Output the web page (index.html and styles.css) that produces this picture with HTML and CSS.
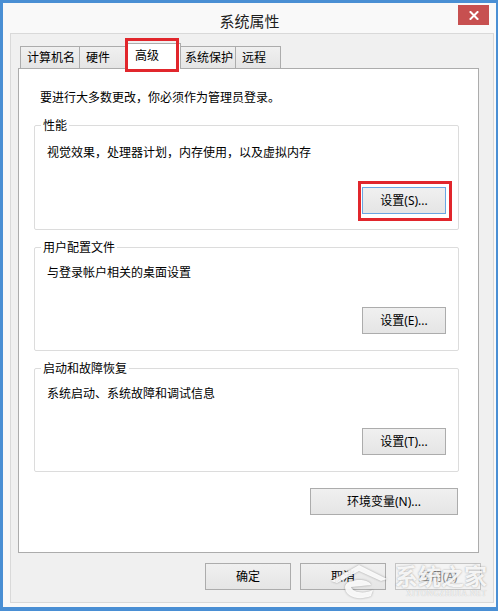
FILE: index.html
```html
<!DOCTYPE html>
<html lang="zh-CN">
<head>
<meta charset="utf-8">
<title>系统属性</title>
<link rel="stylesheet" href="styles.css">
</head>
<body>
<div class="window">
  <div class="titlebar">
    <div class="title">系统属性</div>
    <div class="close" aria-label="关闭">
      <svg width="10" height="9" viewBox="0 0 10 9"><path d="M1.5 1 L8.5 8 M8.5 1 L1.5 8" stroke="#fff" stroke-width="2" stroke-linecap="square" fill="none"/></svg>
    </div>
  </div>
  <div class="client">
    <div class="tabs">
      <div class="tab tab-1">计算机名</div>
      <div class="tab tab-2">硬件</div>
      <div class="tab tab-3 active">高级<span class="mark mark-tab"></span></div>
      <div class="tab tab-4">系统保护</div>
      <div class="tab tab-5">远程</div>
    </div>
    <div class="panel">
      <p class="intro">要进行大多数更改，你必须作为管理员登录。</p>
      <fieldset class="group group-first">
        <legend>性能</legend>
        <p class="desc">视觉效果，处理器计划，内存使用，以及虚拟内存</p>
        <div class="btn-row"><button class="btn btn-set is-default">设置(S)...<span class="mark mark-btn"></span></button></div>
      </fieldset>
      <fieldset class="group">
        <legend>用户配置文件</legend>
        <p class="desc">与登录帐户相关的桌面设置</p>
        <div class="btn-row"><button class="btn btn-set">设置(E)...</button></div>
      </fieldset>
      <fieldset class="group">
        <legend>启动和故障恢复</legend>
        <p class="desc">系统启动、系统故障和调试信息</p>
        <div class="btn-row"><button class="btn btn-set">设置(T)...</button></div>
      </fieldset>
      <div class="env-row"><button class="btn btn-env">环境变量(N)...</button></div>
    </div>
    <div class="footer">
      <button class="btn btn-foot">确定</button>
      <button class="btn btn-foot">取消</button>
      <button class="btn btn-foot" disabled>应用(A)</button>
    </div>
  </div>
  <div class="watermark" aria-hidden="true">
    <svg class="wm-logo" width="66" height="40" viewBox="0 0 66 40">
      <path d="M6 20 L34 4 L62 18 L56 20 L34 10 L12 22 Z" fill="rgba(255,255,255,0.9)"/>
      <path d="M20 26 C20 18 44 16 46 24 L26 26 C28 32 40 33 48 29 L46 35 C34 40 20 36 20 26 Z" fill="rgba(255,255,255,0.9)"/>
    </svg>
    <div class="wm-text">
      <span class="wm-name">系统之家</span>
      <span class="wm-url">XITONGZHIJIA.NET</span>
    </div>
  </div>
</div>
</body>
</html>
```
FILE: styles.css
```css
* { box-sizing: border-box; }
html, body { margin: 0; padding: 0; }
body {
  width: 498px;
  height: 611px;
  overflow: hidden;
  font-family: "Noto Sans", "Noto Sans CJK SC", sans-serif;
  font-size: 12px;
  color: #000;
  background: #4a8fd4;
}
.window {
  position: relative;
  width: 498px;
  height: 611px;
  border-style: solid;
  border-color: #4a8fd4;
  border-width: 3px 2px 4px 3px;
  background: #f9f9f9;
  display: flex;
  flex-direction: column;
}
.titlebar {
  height: 30px;
  display: grid;
  grid-template-columns: 1fr auto 1fr;
  align-items: start;
}
.title {
  grid-column: 2;
  padding-top: 6px;
  line-height: 24px;
  font-size: 15px;
  color: #1e1e1e;
  font-family: "Noto Sans CJK SC", sans-serif;
}
.close {
  grid-column: 3;
  justify-self: end;
  margin-top: 2px;
  margin-right: 7px;
  width: 31px;
  height: 20px;
  background: #c75050;
  display: flex;
  align-items: center;
  justify-content: center;
}
.client {
  flex: 1;
  margin: 0 2px 4px 7px;
  border: 1px solid #d9d9d9;
  background: #f0f0f0;
  padding: 12px 12px 0 7px;
  display: flex;
  flex-direction: column;
}
.tabs {
  display: flex;
  align-items: flex-end;
  height: 22px;
  margin-left: 2px;
}
.tab {
  height: 22px;
  border: 1px solid #acacac;
  border-bottom: none;
  background: linear-gradient(#f0f0f0, #e5e5e5);
  padding: 0 0 0 6px;
  line-height: 20px;
  white-space: nowrap;
  font-family: "Noto Sans CJK SC", sans-serif;
}
.tab + .tab { border-left: none; }
.tab-1 { width: 60px; }
.tab-2 { width: 47px; }
.tab-3 { width: 52px; }
.tab-4 { width: 57px; }
.tab-5 { width: 45px; }
.tab.active {
  position: relative;
  z-index: 2;
  width: 56px;
  height: 26px;
  margin: 0 -2px -1px -2px;
  border-left: 1px solid #acacac;
  background: #fff;
  padding: 1px 0 0 9px;
}
.tab.active + .tab { border-left: none; }
.mark {
  position: absolute;
  border: 3px solid #e1262c;
  z-index: 3;
  pointer-events: none;
}
.mark-tab {
  left: -1px;
  top: -6px;
  width: 54px;
  height: 34px;
}
.panel {
  position: relative;
  z-index: 1;
  width: 461px;
  height: 485px;
  background: #fff;
  border: 1px solid #acacac;
  padding: 20px 0 0 15px;
  display: flex;
  flex-direction: column;
}
.intro {
  margin: 0 0 12px 6px;
  line-height: 16px;
  font-family: "Noto Sans CJK SC", sans-serif;
}
.group {
  width: 425px;
  margin: 0 0 9px 0;
  min-width: 0;
  border: 1px solid #dcdcdc;
  border-radius: 2px;
  padding: 9px 12px 16px 6px;
}
.group-first {
  padding-top: 11px;
  padding-bottom: 15px;
}
.group legend {
  padding: 0 2px;
  line-height: 16px;
  font-family: "Noto Sans CJK SC", sans-serif;
}
.desc {
  margin: 0 0 0 6px;
  line-height: 16px;
  font-family: "Noto Sans CJK SC", sans-serif;
}
.btn-row {
  display: flex;
  justify-content: flex-end;
  margin-top: 27px;
}
.btn {
  position: relative;
  height: 27px;
  margin: 0;
  padding: 0;
  border: 1px solid #acacac;
  background: linear-gradient(#f0f0f0, #e5e5e5);
  font-family: "Noto Sans", "Noto Sans CJK SC", sans-serif;
  font-size: 12px;
  color: #000;
  line-height: 25px;
  text-align: center;
}
.btn.is-default { border-color: #6aa6e3; }
.btn:disabled {
  color: #8a8a8a;
  border-color: #c4c4c4;
  background: #f4f4f4;
}
.btn-set { width: 84px; }
.mark-btn {
  left: -5px;
  top: -7px;
  width: 94px;
  height: 40px;
}
.env-row {
  display: flex;
  justify-content: flex-end;
  width: 425px;
  margin-top: 7px;
}
.btn-env { width: 148px; margin-right: 1px; }
.footer {
  display: flex;
  justify-content: flex-end;
  gap: 9px;
  margin-top: 10px;
}
.btn-foot { width: 86px; }
.watermark {
  position: absolute;
  left: 322px;
  top: 556px;
  display: flex;
  align-items: flex-start;
  z-index: 5;
  pointer-events: none;
}
.wm-logo {
  margin-top: 2px;
  filter: drop-shadow(0 0 1px rgba(0,0,0,0.35));
}
.wm-text {
  display: flex;
  flex-direction: column;
  align-items: flex-end;
  margin-left: 4px;
}
.wm-name {
  font-family: "Noto Sans CJK SC", sans-serif;
  font-size: 23px;
  line-height: 32px;
  font-weight: bold;
  color: rgba(255,255,255,0.88);
  text-shadow: 0 0 2px rgba(0,0,0,0.35);
}
.wm-url {
  margin-top: -2px;
  font-family: "Liberation Serif", serif;
  font-size: 8px;
  line-height: 10px;
  letter-spacing: 0.5px;
  color: rgba(255,255,255,0.9);
  text-shadow: 0 0 1px rgba(0,0,0,0.3);
}
```
